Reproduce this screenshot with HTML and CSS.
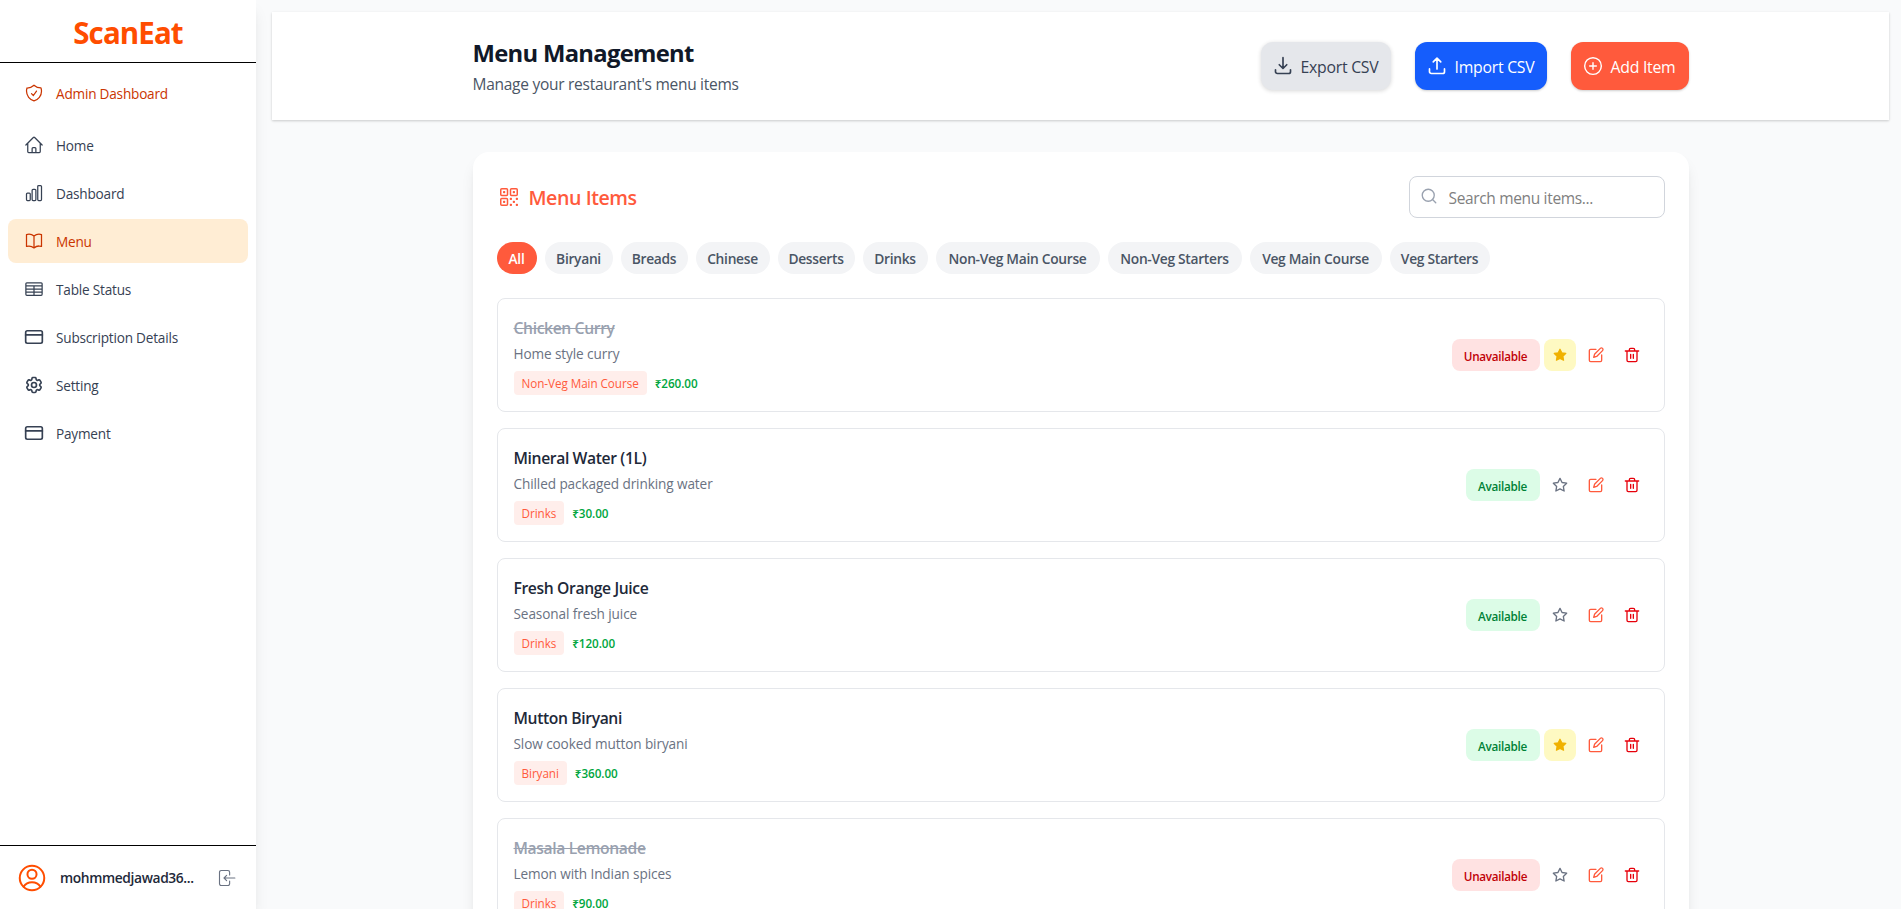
FILE: index.html
```html
<!DOCTYPE html>
<html lang="en">
<head>
    <meta charset="UTF-8">
    <meta name="viewport" content="width=device-width, initial-scale=1.0">
    <title>ScanEat</title>
    <link rel="stylesheet" href="styles.css">
</head>
<body>
<svg class="sprite" xmlns="http://www.w3.org/2000/svg">
    <symbol id="shield" viewBox="0 0 24 24"><path d="M9 12.75 11.25 15 15 9.75m-3-7.036A11.959 11.959 0 0 1 3.598 6 11.99 11.99 0 0 0 3 9.749c0 5.592 3.824 10.29 9 11.623 5.176-1.332 9-6.03 9-11.622 0-1.31-.21-2.571-.598-3.751h-.152c-3.196 0-6.1-1.248-8.25-3.285Z"/></symbol>
    <symbol id="home" viewBox="0 0 24 24"><path d="m2.25 12 8.954-8.955c.44-.439 1.152-.439 1.591 0L21.75 12M4.5 9.75v10.125c0 .621.504 1.125 1.125 1.125H9.75v-4.875c0-.621.504-1.125 1.125-1.125h2.25c.621 0 1.125.504 1.125 1.125V21h4.125c.621 0 1.125-.504 1.125-1.125V9.75M8.25 21h8.25"/></symbol>
    <symbol id="chart" viewBox="0 0 24 24"><path d="M3 13.125C3 12.504 3.504 12 4.125 12h2.25c.621 0 1.125.504 1.125 1.125v6.75C7.5 20.496 6.996 21 6.375 21h-2.25A1.125 1.125 0 0 1 3 19.875v-6.75ZM9.75 8.625c0-.621.504-1.125 1.125-1.125h2.25c.621 0 1.125.504 1.125 1.125v11.25c0 .621-.504 1.125-1.125 1.125h-2.25a1.125 1.125 0 0 1-1.125-1.125V8.625ZM16.5 4.125c0-.621.504-1.125 1.125-1.125h2.25C20.496 3 21 3.504 21 4.125v15.75c0 .621-.504 1.125-1.125 1.125h-2.25a1.125 1.125 0 0 1-1.125-1.125V4.125Z"/></symbol>
    <symbol id="book" viewBox="0 0 24 24"><path d="M12 6.042A8.967 8.967 0 0 0 6 3.75c-1.052 0-2.062.18-3 .512v14.25A8.987 8.987 0 0 1 6 18c2.305 0 4.408.867 6 2.292m0-14.25a8.966 8.966 0 0 1 6-2.292c1.052 0 2.062.18 3 .512v14.25A8.987 8.987 0 0 0 18 18a8.967 8.967 0 0 0-6 2.292m0-14.25v14.25"/></symbol>
    <symbol id="table" viewBox="0 0 24 24"><path d="M3.375 19.5h17.25m-17.25 0a1.125 1.125 0 0 1-1.125-1.125M3.375 19.5h17.25m0 0a1.125 1.125 0 0 0 1.125-1.125M2.25 18.375V5.625m0 12.75v-1.5m19.5 1.5V5.625M21.75 5.625c0-.621-.504-1.125-1.125-1.125H3.375c-.621 0-1.125.504-1.125 1.125M2.25 8.25h19.5M2.25 12h19.5M2.25 15.75h19.5M12 8.25V19.5"/></symbol>
    <symbol id="card" viewBox="0 0 24 24"><rect x="2" y="4.5" width="20" height="15" rx="2"/><path d="M2 9.5h20"/></symbol>
    <symbol id="gear" viewBox="0 0 24 24"><path d="M9.594 3.94c.09-.542.56-.94 1.11-.94h2.593c.55 0 1.02.398 1.11.94l.213 1.281c.063.374.313.686.645.87.074.04.147.083.22.127.325.196.72.257 1.075.124l1.217-.456a1.125 1.125 0 0 1 1.37.49l1.296 2.247a1.125 1.125 0 0 1-.26 1.431l-1.003.827c-.293.241-.438.613-.43.992a7.723 7.723 0 0 1 0 .255c-.008.378.137.75.43.991l1.004.827c.424.35.534.955.26 1.43l-1.298 2.247a1.125 1.125 0 0 1-1.369.491l-1.217-.456c-.355-.133-.75-.072-1.076.124a6.47 6.47 0 0 1-.22.128c-.331.183-.581.495-.644.869l-.213 1.281c-.09.543-.56.94-1.11.94h-2.594c-.55 0-1.019-.398-1.11-.94l-.213-1.281c-.062-.374-.312-.686-.644-.87a6.52 6.52 0 0 1-.22-.127c-.325-.196-.72-.257-1.076-.124l-1.217.456a1.125 1.125 0 0 1-1.369-.49l-1.297-2.247a1.125 1.125 0 0 1 .26-1.431l1.004-.827c.292-.24.437-.613.43-.991a6.932 6.932 0 0 1 0-.255c.007-.38-.138-.751-.43-.992l-1.004-.827a1.125 1.125 0 0 1-.26-1.43l1.297-2.247a1.125 1.125 0 0 1 1.37-.491l1.216.456c.356.133.751.072 1.076-.124.072-.044.146-.086.22-.128.332-.183.582-.495.644-.869l.214-1.28Z"/><circle cx="12" cy="12" r="3"/></symbol>
    <symbol id="user" viewBox="0 0 24 24"><circle cx="12" cy="12" r="10.5"/><circle cx="12" cy="8.8" r="3.9"/><path d="M4.8 19.4c1.500-2.300 4.100-3.700 7.200-3.700s5.700 1.400 7.200 3.700"/></symbol>
    <symbol id="logout" viewBox="0 0 24 24"><path d="M15.500 8V4.200a2.200 2.200 0 0 0-2.200-2.200H4.200A2.200 2.200 0 0 0 2 4.200v15.600A2.200 2.200 0 0 0 4.200 22h9.100a2.200 2.200 0 0 0 2.200-2.200V16M22.500 12H8m3.500-3.500L8 12l3.500 3.500"/></symbol>
    <symbol id="download" viewBox="0 0 24 24"><path d="M3 16.500v2.250A2.250 2.250 0 0 0 5.250 21h13.500A2.250 2.250 0 0 0 21 18.750V16.500M16.500 10.500 12 15m0 0L7.500 10.500m4.500 4.500V2"/></symbol>
    <symbol id="upload" viewBox="0 0 24 24"><path d="M3 15.500v3.250A2.250 2.250 0 0 0 5.250 21h13.500A2.250 2.250 0 0 0 21 18.750V15.500m-13.500-8.500L12 2.500m0 0 4.500 4.500M12 2.500v13"/></symbol>
    <symbol id="plus" viewBox="0 0 24 24"><circle cx="12" cy="12" r="10"/><path d="M12 8v8M8 12h8"/></symbol>
    <symbol id="search" viewBox="0 0 24 24"><circle cx="11" cy="11" r="8"/><path d="m21 21-4.300-4.300"/></symbol>
    <symbol id="qr" viewBox="0 0 24 24"><rect x="3.750" y="3.750" width="6.750" height="6.750" rx="1"/><rect x="13.500" y="3.750" width="6.750" height="6.750" rx="1"/><rect x="3.750" y="13.500" width="6.750" height="6.750" rx="1"/><path d="M6.750 6.750h.75v.75h-.75zM16.500 6.750h.75v.75h-.75zM6.750 16.500h.75v.75h-.75zM13.500 13.500h.75v.75h-.75zM19.500 13.500h.75v.75h-.75zM16.500 16.500h.75v.75h-.75zM13.500 19.500h.75v.75h-.75zM19.500 19.500h.75v.75h-.75z"/></symbol>
    <symbol id="star" viewBox="0 0 24 24"><path d="M12 2l3.090 6.260L22 9.270l-5 4.870 1.180 6.880L12 17.770l-6.180 3.250L7 14.140 2 9.270l6.910-1.010z"/></symbol>
    <symbol id="edit" viewBox="0 0 24 24"><path d="M12 3.500H4a2 2 0 0 0-2 2v14.500a2 2 0 0 0 2 2h14.500a2 2 0 0 0 2-2V12"/><path d="M18.500 2.100a2.240 2.240 0 0 1 3.300 3.300L13 14.200 8.600 15.400 9.800 11z"/></symbol>
    <symbol id="trash" viewBox="0 0 24 24"><path d="M2 6h20M19.500 6v14a2 2 0 0 1-2 2h-11a2 2 0 0 1-2-2V6M8 6V4a2 2 0 0 1 2-2h4a2 2 0 0 1 2 2v2M10 11v6M14 11v6"/></symbol>
</svg>

<div class="layout">
    <!-- Sidebar -->
    <aside class="sidebar">
        <div class="logo">ScanEat</div>
        <nav class="nav">
            <a class="nav-link admin"><svg><use href="#shield"/></svg><span>Admin Dashboard</span></a>
            <a class="nav-link"><svg><use href="#home"/></svg><span>Home</span></a>
            <a class="nav-link"><svg><use href="#chart"/></svg><span>Dashboard</span></a>
            <a class="nav-link active"><svg><use href="#book"/></svg><span>Menu</span></a>
            <a class="nav-link"><svg><use href="#table"/></svg><span>Table Status</span></a>
            <a class="nav-link bold-icon"><svg><use href="#card"/></svg><span>Subscription Details</span></a>
            <a class="nav-link bold-icon"><svg><use href="#gear"/></svg><span>Setting</span></a>
            <a class="nav-link bold-icon"><svg><use href="#card"/></svg><span>Payment</span></a>
        </nav>
        <div class="user">
            <svg class="avatar"><use href="#user"/></svg>
            <span class="email">mohmmedjawad36...</span>
            <svg class="logout"><use href="#logout"/></svg>
        </div>
    </aside>

    <main class="main">
        <!-- Header -->
        <header class="header">
            <div class="container header-row">
                <div>
                    <h1>Menu Management</h1>
                    <p>Manage your restaurant's menu items</p>
                </div>
                <div class="header-buttons">
                    <button class="btn export"><svg><use href="#download"/></svg><span>Export CSV</span></button>
                    <button class="btn import"><svg><use href="#upload"/></svg><span>Import CSV</span></button>
                    <button class="btn add"><svg><use href="#plus"/></svg><span>Add Item</span></button>
                </div>
            </div>
        </header>

        <!-- Menu items -->
        <div class="container">
            <section class="panel">
                <div class="panel-head">
                    <h2><svg><use href="#qr"/></svg><span>Menu Items</span></h2>
                    <label class="search">
                        <svg><use href="#search"/></svg>
                        <input type="text" placeholder="Search menu items...">
                    </label>
                </div>
                <div class="chips" id="chips"></div>
                <div class="items" id="items"></div>
            </section>
        </div>
    </main>
</div>

<script>
    const categories = [
        ['All', 40], ['Biryani', 68], ['Breads', 67], ['Chinese', 74], ['Desserts', 77], ['Drinks', 65],
        ['Non-Veg Main Course', 164], ['Non-Veg Starters', 134], ['Veg Main Course', 132], ['Veg Starters', 100]
    ];
    const items = [
        { name: 'Chicken Curry', desc: 'Home style curry', category: 'Non-Veg Main Course', price: 260, available: false, special: true },
        { name: 'Mineral Water (1L)', desc: 'Chilled packaged drinking water', category: 'Drinks', price: 30, available: true, special: false },
        { name: 'Fresh Orange Juice', desc: 'Seasonal fresh juice', category: 'Drinks', price: 120, available: true, special: false },
        { name: 'Mutton Biryani', desc: 'Slow cooked mutton biryani', category: 'Biryani', price: 360, available: true, special: true },
        { name: 'Masala Lemonade', desc: 'Lemon with Indian spices', category: 'Drinks', price: 90, available: false, special: false }
    ];

    document.getElementById('chips').innerHTML = categories.map(([name, width], i) =>
        `<button class="chip ${i === 0 ? 'selected' : ''}" style="width:${width}px">${name}</button>`
    ).join('');

    document.getElementById('items').innerHTML = items.map(item => `
        <div class="item ${item.available ? '' : 'off'}">
            <div>
                <h3><span>${item.name}</span></h3>
                <p class="desc">${item.desc}</p>
                <div class="meta">
                    <span class="tag">${item.category}</span>
                    <span class="price">₹${item.price.toFixed(2)}</span>
                </div>
            </div>
            <div class="actions">
                <button class="status">${item.available ? 'Available' : 'Unavailable'}</button>
                <button class="icon-btn star ${item.special ? 'on' : ''}"><svg><use href="#star"/></svg></button>
                <button class="icon-btn edit"><svg><use href="#edit"/></svg></button>
                <button class="icon-btn trash"><svg><use href="#trash"/></svg></button>
            </div>
        </div>`).join('');
</script>
</body>
</html>
```
FILE: styles.css
```css
* {
    margin: 0;
    padding: 0;
    box-sizing: border-box;
}

body {
    height: 100vh;
    overflow: hidden;
    background: #f9fafb;
    color: #1e2939;
    font-family: "Segoe UI", "Open Sans", "Noto Sans", sans-serif;
    font-size: 16px;
    line-height: 24px;
}

button,
input {
    font: inherit;
    border: none;
    background: none;
    white-space: nowrap;
}

svg {
    display: block;
    flex-shrink: 0;
    fill: none;
    stroke: currentColor;
    stroke-width: 1.5;
    stroke-linecap: round;
    stroke-linejoin: round;
}

.sprite {
    display: none;
}

.layout {
    display: flex;
    height: 100vh;
}

/* Sidebar */
.sidebar {
    display: flex;
    flex-direction: column;
    width: 256px;
    flex-shrink: 0;
    background: #fff;
    box-shadow: 0 10px 15px -3px rgba(0, 0, 0, 0.1), 0 4px 6px -4px rgba(0, 0, 0, 0.1);
}

.logo {
    height: 63px;
    padding-top: 15px;
    border-bottom: 1px solid #000;
    color: #ff4d00;
    font-size: 29.5px;
    font-weight: 700;
    line-height: 36px;
    text-align: center;
    letter-spacing: -0.9px;
}

.nav {
    display: flex;
    flex-direction: column;
    flex: 1;
    gap: 4px;
    padding: 8px;
}

.nav-link {
    display: flex;
    align-items: center;
    gap: 12px;
    height: 44px;
    padding: 0 16px;
    border-radius: 8px;
    color: #364153;
    font-size: 13.6px;
    letter-spacing: -0.2px;
}

.nav-link span {
    padding-top: 1px;
}

.nav-link svg {
    width: 20px;
    height: 20px;
}

.nav-link.bold-icon svg {
    stroke-width: 2;
}

.nav-link.admin {
    margin-bottom: 4px;
    color: #ca3500;
}

.nav-link.active {
    background: #ffedd4;
    color: #ca3500;
}

.user {
    display: flex;
    align-items: center;
    height: 64px;
    padding: 0 20px 0 18px;
    border-top: 1px solid #000;
}

.avatar {
    width: 28px;
    height: 28px;
    color: #ff4d00;
    stroke-width: 1.7;
}

.email {
    flex: 1;
    margin-left: 14px;
    font-size: 13.8px;
    font-weight: 600;
    white-space: nowrap;
    letter-spacing: -0.38px;
}

.logout {
    width: 18px;
    height: 18px;
    color: #6a7282;
}

/* Header */
.main {
    flex: 1;
    min-width: 0;
    padding: 12px 12px 0 16px;
    overflow: hidden;
}

.container {
    max-width: 1280px;
    margin: 0 auto;
    padding: 0 32px;
}

.header {
    height: 108px;
    padding-top: 28px;
    margin-bottom: 32px;
    background: #fff;
    box-shadow: 0 1px 3px rgba(0, 0, 0, 0.1), 0 1px 2px rgba(0, 0, 0, 0.1);
}

.header-row {
    display: flex;
    justify-content: space-between;
}

h1 {
    color: #101828;
    font-size: 23.8px;
    font-weight: 700;
    line-height: 27px;
    letter-spacing: -0.7px;
}

.header p {
    margin-top: 5px;
    color: #4a5565;
    font-size: 15.5px;
    letter-spacing: -0.27px;
}

.header-buttons {
    display: flex;
    gap: 24px;
    padding-top: 2px;
}

.btn {
    display: flex;
    align-items: center;
    gap: 8px;
    height: 48px;
    padding: 0 12px;
    border-radius: 12px;
    color: #fff;
    box-shadow: 0 1px 3px rgba(0, 0, 0, 0.1), 0 1px 2px rgba(0, 0, 0, 0.1);
    font-size: 15.8px;
    letter-spacing: -0.25px;
}

.btn span {
    padding-top: 1px;
}

.btn svg {
    width: 20px;
    height: 20px;
    stroke-width: 2;
}

.export {
    width: 130px;
    background: #e5e7eb;
    color: #364153;
    box-shadow: 0 1px 4px rgba(0, 0, 0, 0.16);
}

.import {
    width: 132px;
    background: #155dfc;
}

.add {
    width: 118px;
    background: #ff5a3c;
}

.add svg {
    stroke-width: 1.7;
}

/* Panel */
.panel {
    padding: 24px;
    border-radius: 16px;
    background: #fff;
    box-shadow: 0 10px 15px -3px rgba(0, 0, 0, 0.1), 0 4px 6px -4px rgba(0, 0, 0, 0.1);
}

.panel-head {
    display: flex;
    align-items: center;
    justify-content: space-between;
    margin-bottom: 24px;
}

h2 {
    display: flex;
    align-items: center;
    gap: 8px;
    color: #ff5a3c;
    font-size: 19.6px;
    font-weight: 600;
    line-height: 28px;
    letter-spacing: -0.44px;
}

h2 span {
    padding-top: 2px;
}

h2 svg {
    width: 24px;
    height: 24px;
}

.search {
    display: flex;
    align-items: center;
    gap: 11px;
    width: 256px;
    height: 42px;
    padding: 0 10px;
    border: 1px solid #d1d5dc;
    border-radius: 8px;
}

.search svg {
    width: 18px;
    height: 18px;
    margin-bottom: 2px;
    color: #99a1af;
    stroke-width: 1.8;
}

.search input {
    width: 190px;
    padding-top: 1px;
    font-size: 15.5px;
    letter-spacing: -0.34px;
}

.search input::placeholder {
    color: #808080;
}

.chips {
    display: flex;
    gap: 8px;
    margin-bottom: 24px;
}

.chip {
    height: 32px;
    padding-top: 1px;
    border-radius: 16px;
    background: #f3f4f6;
    color: #4a5565;
    font-size: 13.8px;
    font-weight: 600;
    letter-spacing: -0.3px;
}

.chip.selected {
    background: #ff5a3c;
    color: #fff;
}

/* Menu item rows */
.items {
    display: flex;
    flex-direction: column;
    gap: 16px;
}

.item {
    display: flex;
    align-items: center;
    justify-content: space-between;
    padding: 16px;
    border: 1px solid #e5e7eb;
    border-radius: 8px;
}

h3 {
    padding-top: 1px;
    font-size: 15.7px;
    font-weight: 600;
    line-height: 24px;
    letter-spacing: -0.38px;
}

.off h3 {
    color: #99a1af;
    text-decoration: line-through;
}

.desc {
    margin: 4px 0 7px;
    color: #6a7282;
    font-size: 13.6px;
    line-height: 20px;
    letter-spacing: -0.1px;
}

.meta {
    display: flex;
    align-items: center;
    gap: 8px;
    font-size: 11.7px;
    line-height: 23px;
    letter-spacing: -0.06px;
}

.tag {
    padding: 1px 8px 0;
    border-radius: 4px;
    background: #ffeeeb;
    color: #ff5a3c;
}

.price {
    padding-top: 1px;
    color: #00a63e;
    font-weight: 600;
}

.actions {
    display: flex;
    gap: 4px;
}

.status {
    width: 74px;
    height: 32px;
    padding-top: 1px;
    border-radius: 8px;
    background: #dcfce7;
    color: #008236;
    font-size: 11.7px;
    font-weight: 600;
    letter-spacing: -0.28px;
}

.off .status {
    width: 88px;
    background: #ffe2e2;
    color: #c10007;
}

.icon-btn {
    display: flex;
    align-items: center;
    justify-content: center;
    width: 32px;
    height: 32px;
    border-radius: 8px;
}

.icon-btn svg {
    width: 16px;
    height: 16px;
    stroke-width: 2;
}

.star {
    color: #6a7282;
}

.star.on {
    background: #fef9c2;
    color: #f0b100;
}

.star.on svg {
    width: 14px;
    height: 14px;
    fill: currentColor;
}

.edit {
    color: #ff5a3c;
}

.trash {
    color: #e7000b;
}
```
